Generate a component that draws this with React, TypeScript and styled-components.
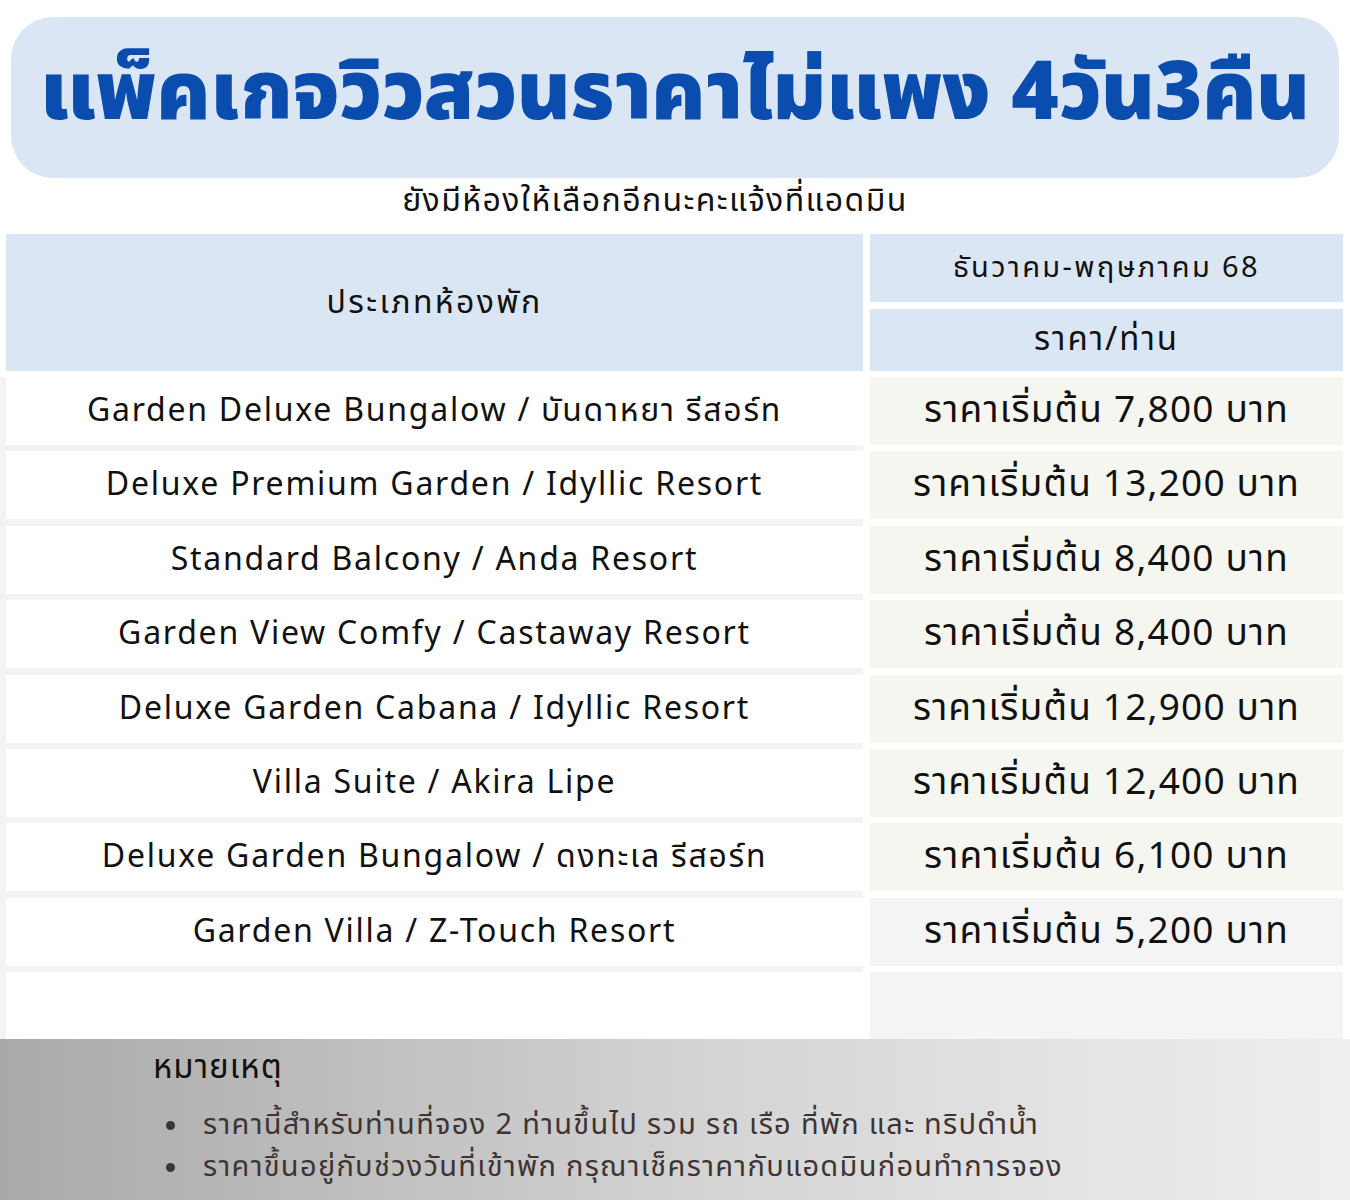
import React from "react";
import styled, { createGlobalStyle } from "styled-components";

const Global = createGlobalStyle`
  html, body { margin: 0; padding: 0; background: #ffffff; }
  body { font-family: "Noto Sans Thai", "Noto Sans", "DejaVu Sans", sans-serif; color: #111; }
  * { box-sizing: border-box; }
`;

const Page = styled.div`
  width: 1350px;
  height: 1200px;
  background: #ffffff;
  display: flex;
  flex-direction: column;
  overflow: hidden;
`;

const TitleBox = styled.div`
  margin: 17px 11px 0 11px;
  height: 161px;
  border-radius: 42px;
  background: #dbe6f4;
  display: flex;
  align-items: center;
  justify-content: center;
  padding-bottom: 6px;
`;

const Title = styled.h1`
  margin: 0;
  font-size: 81px;
  font-weight: 900;
  color: #0a4daf;
  line-height: 1;
  white-space: nowrap;
`;

const Subtitle = styled.div`
  height: 56px;
  display: flex;
  align-items: center;
  justify-content: center;
  padding-bottom: 10px;
  padding-right: 40px;
  font-size: 32px;
  letter-spacing: 1.4px;
  color: #111;
`;

const Table = styled.div`
  display: grid;
  grid-template-columns: 863px 473px;
  column-gap: 7px;
`;

const HeaderLeft = styled.div`
  margin-left: 6px;
  height: 137px;
  background: #dbe6f4;
  display: flex;
  align-items: center;
  justify-content: center;
  font-size: 32px;
  letter-spacing: 2.4px;
  color: #111;
`;

const HeaderRight = styled.div`
  display: flex;
  flex-direction: column;
  gap: 7px;
`;

const HeaderCell = styled.div<{ $h: number; $size: number; $ls: number }>`
  height: ${(p) => p.$h}px;
  background: #dbe6f4;
  display: flex;
  align-items: center;
  justify-content: center;
  font-size: ${(p) => p.$size}px;
  letter-spacing: ${(p) => p.$ls}px;
  color: #111;
`;

const LeftBody = styled.div`
  margin-top: 6px;
  background: #f3f3f3;
  padding-left: 6px;
  display: flex;
  flex-direction: column;
  gap: 6.4px;
  height: 662px;
`;

const RightBody = styled.div`
  margin-top: 6px;
  display: flex;
  flex-direction: column;
  gap: 6.4px;
  height: 662px;
`;

const NameCell = styled.div`
  height: 68px;
  flex: none;
  background: #ffffff;
  display: flex;
  align-items: center;
  justify-content: center;
  font-size: 32px;
  letter-spacing: 1.75px;
  color: #111;
`;

const EmptyLeft = styled.div`
  flex: 1;
  background: #ffffff;
`;

const PriceCell = styled.div<{ $tone: "warm" | "grey" }>`
  height: 68px;
  flex: none;
  background: ${(p) => (p.$tone === "warm" ? "#f6f6f1" : "#f4f4f4")};
  display: flex;
  align-items: center;
  justify-content: center;
  font-size: 37px;
  letter-spacing: 1.2px;
  color: #111;
`;

const EmptyRight = styled.div`
  flex: 1;
  background: #f4f4f4;
`;

const Footer = styled.div`
  flex: 1;
  background: linear-gradient(90deg, #a9a9a9 0%, #d6d6d6 55%, #efefef 100%);
  padding: 7px 0 0 153px;
`;

const NoteTitle = styled.div`
  font-size: 33px;
  letter-spacing: 1px;
  color: #111;
  line-height: 44px;
`;

const NoteList = styled.ul`
  margin: 14px 0 0 0;
  padding: 0;
  list-style: none;
  color: #3e3434;
  font-size: 29px;
  letter-spacing: 1.3px;
  line-height: 42px;
`;

const NoteItem = styled.li`
  display: flex;
  align-items: center;
  gap: 28px;
  padding-left: 13px;
`;

const Bullet = styled.span`
  width: 9px;
  height: 9px;
  border-radius: 50%;
  background: #3e3434;
  flex: none;
`;

const rows: { name: string; price: string; tone: "warm" | "grey" }[] = [
  { name: "Garden Deluxe Bungalow / บันดาหยา รีสอร์ท", price: "ราคาเริ่มต้น 7,800 บาท", tone: "warm" },
  { name: "Deluxe Premium Garden / Idyllic Resort", price: "ราคาเริ่มต้น 13,200 บาท", tone: "warm" },
  { name: "Standard Balcony / Anda Resort", price: "ราคาเริ่มต้น 8,400 บาท", tone: "warm" },
  { name: "Garden View Comfy / Castaway Resort", price: "ราคาเริ่มต้น 8,400 บาท", tone: "warm" },
  { name: "Deluxe Garden Cabana / Idyllic Resort", price: "ราคาเริ่มต้น 12,900 บาท", tone: "warm" },
  { name: "Villa Suite / Akira Lipe", price: "ราคาเริ่มต้น 12,400 บาท", tone: "warm" },
  { name: "Deluxe Garden Bungalow / ดงทะเล รีสอร์ท", price: "ราคาเริ่มต้น 6,100 บาท", tone: "warm" },
  { name: "Garden Villa / Z-Touch Resort", price: "ราคาเริ่มต้น 5,200 บาท", tone: "grey" },
];

const notes = [
  "ราคานี้สำหรับท่านที่จอง 2 ท่านขึ้นไป รวม รถ เรือ ที่พัก และ ทริปดำน้ำ",
  "ราคาขึ้นอยู่กับช่วงวันที่เข้าพัก กรุณาเช็คราคากับแอดมินก่อนทำการจอง",
];

export default function App() {
  return (
    <Page>
      <Global />
      <TitleBox>
        <Title>แพ็คเกจวิวสวนราคาไม่แพง 4วัน3คืน</Title>
      </TitleBox>
      <Subtitle>ยังมีห้องให้เลือกอีกนะคะแจ้งที่แอดมิน</Subtitle>
      <Table>
        <HeaderLeft>ประเภทห้องพัก</HeaderLeft>
        <HeaderRight>
          <HeaderCell $h={68} $size={29} $ls={2.4}>ธันวาคม-พฤษภาคม 68</HeaderCell>
          <HeaderCell $h={62} $size={33} $ls={2}>ราคา/ท่าน</HeaderCell>
        </HeaderRight>
        <LeftBody>
          {rows.map((r) => (
            <NameCell key={r.name}>{r.name}</NameCell>
          ))}
          <EmptyLeft />
        </LeftBody>
        <RightBody>
          {rows.map((r) => (
            <PriceCell key={r.name} $tone={r.tone}>{r.price}</PriceCell>
          ))}
          <EmptyRight />
        </RightBody>
      </Table>
      <Footer>
        <NoteTitle>หมายเหตุ</NoteTitle>
        <NoteList>
          {notes.map((n) => (
            <NoteItem key={n}>
              <Bullet />
              <span>{n}</span>
            </NoteItem>
          ))}
        </NoteList>
      </Footer>
    </Page>
  );
}
